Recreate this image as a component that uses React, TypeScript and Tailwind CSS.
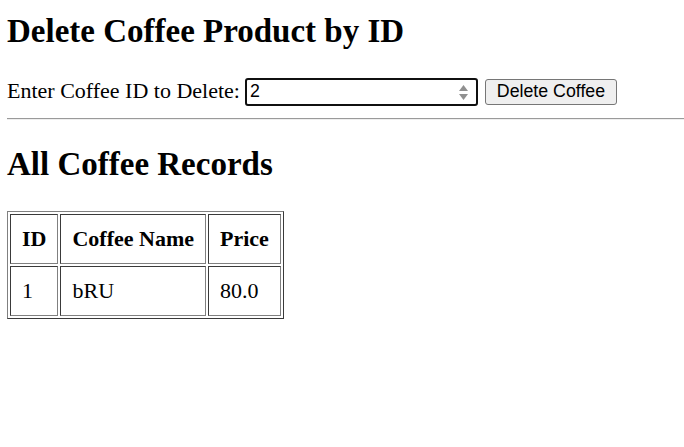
import React from "react";

export default function App() {
  return (
    <div className="min-h-[447px] w-[684px] bg-white pl-[7px] font-['Liberation_Serif',serif] text-black">
      <h2 className="pt-[12px] text-[33px] font-bold leading-[38px]">Delete Coffee Product by ID</h2>

      <div className="mt-[28px] flex h-[28px] items-start">
        <span className="text-[22px] leading-[25px]">Enter Coffee ID to Delete:</span>
        <div className="ml-[5px] flex h-[28px] w-[233px] items-center rounded-[3px] border-2 border-[#101010] bg-white pl-[3px] font-['Liberation_Sans',sans-serif] text-[17.78px] leading-none">
          <span className="flex-1">2</span>
          <div className="mr-[5px] flex h-[22px] w-[14px] items-center justify-center">
            <svg width="9" height="17" viewBox="0 0 9 17">
              <polygon points="4.5,1 9,7 0,7" fill="#909090" />
              <polygon points="0,10 9,10 4.5,16" fill="#909090" />
            </svg>
          </div>
        </div>
        <button className="ml-[7px] mt-[1px] h-[26px] w-[132px] rounded-[3px] border border-[#767676] bg-[#efefef] font-['Liberation_Sans',sans-serif] text-[17.78px] leading-none text-black">
          Delete Coffee
        </button>
      </div>

      <div className="mt-[12px] h-[2px] border-t border-b border-t-[#9a9a9a] border-b-[#eeeeee]" />

      <h2 className="mt-[25px] text-[33px] font-bold leading-[38px]">All Coffee Records</h2>

      <table className="mt-[28px] border-separate border-spacing-[2px] border border-t-[#808080] border-l-[#808080] border-b-[#3a3a3a] border-r-[#3a3a3a] text-[22px] leading-[26px]">
        <thead>
          <tr>
            <th className="border border-t-[#3a3a3a] border-l-[#3a3a3a] border-b-[#808080] border-r-[#808080] px-[11px] py-[11px] text-center font-bold">ID</th>
            <th className="border border-t-[#3a3a3a] border-l-[#3a3a3a] border-b-[#808080] border-r-[#808080] px-[11px] py-[11px] text-center font-bold">Coffee Name</th>
            <th className="border border-t-[#3a3a3a] border-l-[#3a3a3a] border-b-[#808080] border-r-[#808080] px-[11px] py-[11px] text-center font-bold">Price</th>
          </tr>
        </thead>
        <tbody>
          <tr>
            <td className="border border-t-[#3a3a3a] border-l-[#3a3a3a] border-b-[#808080] border-r-[#808080] px-[11px] py-[11px]">1</td>
            <td className="border border-t-[#3a3a3a] border-l-[#3a3a3a] border-b-[#808080] border-r-[#808080] px-[11px] py-[11px]">bRU</td>
            <td className="border border-t-[#3a3a3a] border-l-[#3a3a3a] border-b-[#808080] border-r-[#808080] px-[11px] py-[11px]">80.0</td>
          </tr>
        </tbody>
      </table>
    </div>
  );
}
